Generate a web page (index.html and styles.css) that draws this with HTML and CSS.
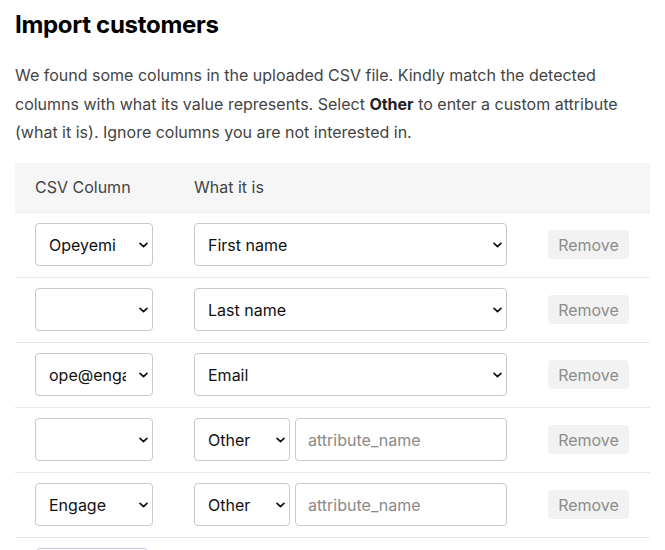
FILE: index.html
```html
<!DOCTYPE html>
<html lang="en">
<head>
<meta charset="utf-8">
<title>Import customers</title>
<link rel="stylesheet" href="styles.css">
</head>
<body>
<main class="page">
  <h1 class="title">Import customers</h1>
  <p class="intro">We found some columns in the uploaded CSV file. Kindly match the detected columns with what its value represents. Select <strong>Other</strong> to enter a custom attribute (what it is). Ignore columns you are not interested in.</p>

  <table class="map">
    <thead>
      <tr>
        <th class="c-col">CSV Column</th>
        <th class="c-what">What it is</th>
        <th class="c-act"></th>
      </tr>
    </thead>
    <tbody>
      <tr>
        <td class="c-col"><span class="sel"><select class="field small"><option>Opeyemi</option></select><svg class="chev" viewBox="0 0 10 6"><path d="M1.2 1.2 5 4.8 8.8 1.2"/></svg></span></td>
        <td class="c-what"><span class="sel"><select class="field wide"><option>First name</option></select><svg class="chev" viewBox="0 0 10 6"><path d="M1.2 1.2 5 4.8 8.8 1.2"/></svg></span></td>
        <td class="c-act"><button class="remove" disabled>Remove</button></td>
      </tr>
      <tr>
        <td class="c-col"><span class="sel"><select class="field small"><option></option></select><svg class="chev" viewBox="0 0 10 6"><path d="M1.2 1.2 5 4.8 8.8 1.2"/></svg></span></td>
        <td class="c-what"><span class="sel"><select class="field wide"><option>Last name</option></select><svg class="chev" viewBox="0 0 10 6"><path d="M1.2 1.2 5 4.8 8.8 1.2"/></svg></span></td>
        <td class="c-act"><button class="remove" disabled>Remove</button></td>
      </tr>
      <tr>
        <td class="c-col"><span class="sel"><select class="field small"><option>ope@engage.so</option></select><svg class="chev" viewBox="0 0 10 6"><path d="M1.2 1.2 5 4.8 8.8 1.2"/></svg></span></td>
        <td class="c-what"><span class="sel"><select class="field wide"><option>Email</option></select><svg class="chev" viewBox="0 0 10 6"><path d="M1.2 1.2 5 4.8 8.8 1.2"/></svg></span></td>
        <td class="c-act"><button class="remove" disabled>Remove</button></td>
      </tr>
      <tr>
        <td class="c-col"><span class="sel"><select class="field small"><option></option></select><svg class="chev" viewBox="0 0 10 6"><path d="M1.2 1.2 5 4.8 8.8 1.2"/></svg></span></td>
        <td class="c-what">
          <div class="pair">
            <span class="sel"><select class="field other"><option>Other</option></select><svg class="chev" viewBox="0 0 10 6"><path d="M1.2 1.2 5 4.8 8.8 1.2"/></svg></span>
            <input class="field attr" type="text" placeholder="attribute_name">
          </div>
        </td>
        <td class="c-act"><button class="remove" disabled>Remove</button></td>
      </tr>
      <tr>
        <td class="c-col"><span class="sel"><select class="field small"><option>Engage</option></select><svg class="chev" viewBox="0 0 10 6"><path d="M1.2 1.2 5 4.8 8.8 1.2"/></svg></span></td>
        <td class="c-what">
          <div class="pair">
            <span class="sel"><select class="field other"><option>Other</option></select><svg class="chev" viewBox="0 0 10 6"><path d="M1.2 1.2 5 4.8 8.8 1.2"/></svg></span>
            <input class="field attr" type="text" placeholder="attribute_name">
          </div>
        </td>
        <td class="c-act"><button class="remove" disabled>Remove</button></td>
      </tr>
    </tbody>
  </table>

  <div class="actions">
    <button class="import">Import</button>
  </div>
</main>
</body>
</html>
```

FILE: styles.css
```css
* { box-sizing: border-box; }

html, body {
  margin: 0;
  padding: 0;
  background: #fff;
}

body {
  font-family: Inter, "Noto Sans", "Liberation Sans", sans-serif;
  color: #111;
  font-size: 16px;
}

.page {
  padding: 10px 15px 0 15px;
}

.title {
  margin: 0;
  font-size: 24px;
  font-weight: 700;
  line-height: 30px;
  color: #000;
  letter-spacing: -0.3px;
}

.intro {
  margin: 21px 0 0 0;
  font-size: 16px;
  line-height: 28.7px;
  color: #444;
}

.intro strong {
  color: #222;
  font-weight: 700;
}

.map {
  margin-top: 16px;
  width: 635px;
  border-collapse: collapse;
}

.map thead tr {
  background: #f6f6f6;
}

.map th {
  text-align: left;
  font-weight: 400;
  color: #444;
  font-size: 16px;
  height: 49px;
  padding: 0 20px;
  border-bottom: 1px solid #e9e9e9;
}

.map td {
  padding: 0 20px;
  height: 65px;
  border-bottom: 1px solid #e9e9e9;
  vertical-align: middle;
}

.c-col { width: 159px; }
.c-what { width: 354px; }
.c-act { text-align: left; }

.sel {
  position: relative;
  display: inline-block;
  vertical-align: middle;
}

.chev {
  position: absolute;
  right: 5px;
  top: 19px;
  width: 9px;
  height: 6px;
  pointer-events: none;
}

.chev path {
  fill: none;
  stroke: #111;
  stroke-width: 1.9;
  stroke-linecap: round;
  stroke-linejoin: round;
}

.field {
  display: block;
  height: 43px;
  border: 1px solid #c9c9c9;
  border-radius: 4px;
  background: #fff;
  font-family: Inter, "Noto Sans", "Liberation Sans", sans-serif;
  font-size: 16px;
  color: #111;
  margin: 0;
}

select.field {
  appearance: none;
  -webkit-appearance: none;
  padding: 0 26px 0 13px;
}

.small { width: 118px; }
.wide { width: 313px; padding-left: 14px; }
.other { width: 96px; padding-left: 14px; }

.pair {
  display: flex;
  gap: 5px;
  align-items: center;
}

.attr {
  width: 212px;
  padding: 0 12px;
  outline: none;
}

.attr::placeholder {
  color: #8a8a8a;
}

.remove {
  display: block;
  width: 81px;
  height: 29px;
  border: none;
  border-radius: 4px;
  background: #f2f2f2;
  color: #8c8c8c;
  font-family: Inter, "Noto Sans", "Liberation Sans", sans-serif;
  font-size: 16px;
  padding: 0;
}

.actions {
  padding: 10px 20px 0 21px;
}

.import {
  width: 112px;
  height: 48px;
  border: 1px solid #c6bfdc;
  border-radius: 4px;
  background: #fff;
  color: #4b3f8a;
  font-family: Inter, "Noto Sans", "Liberation Sans", sans-serif;
  font-size: 16px;
}
```
